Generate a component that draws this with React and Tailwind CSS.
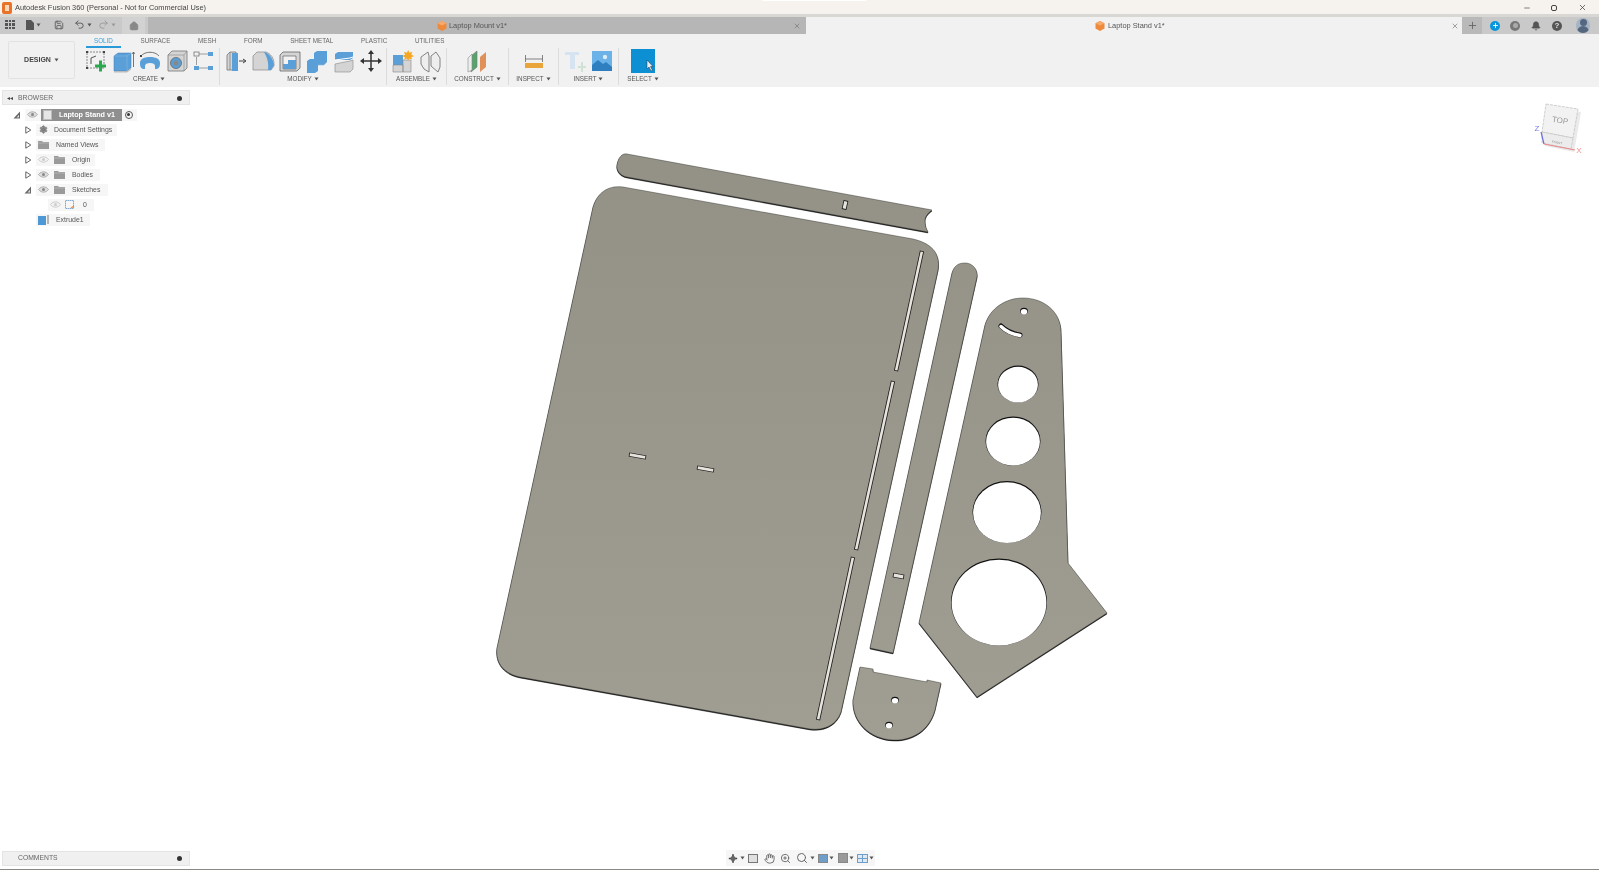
import React from "react";
import { Bell, Hand, Home, Save, Settings, Undo2, Redo2, X, Plus, Minus, Search, ZoomIn } from "lucide-react";

const Caret = ({ c = "#555" }) => (
  <svg width="5" height="4" viewBox="0 0 5 4" className="shrink-0"><path d="M0.500 0.500h4L2.500 3.500z" fill={c} /></svg>
);

const I = ({ children, w = 24, h = 24 }) => (
  <svg width={w} height={h} viewBox={`0 0 ${w} ${h}`} className="shrink-0">{children}</svg>
);

const B = "#5a9fd8", G = "#d4d4d4";

const SketchIcon = () => (
  <I>
    <path d="M3 3h17v16H3z" fill="none" stroke="#888" strokeDasharray="2 1" />
    <path d="M7 15V9l5-2" fill="none" stroke="#555" />
    <path d="M16 14h3v4h4v3h-4v4h-3v-4h-4v-3h4z" transform="translate(-1,-2.5)" fill="#2aa84f" />
    <rect x="2" y="2" width="2" height="2" fill="#444" /><rect x="19" y="2" width="2" height="2" fill="#444" /><rect x="2" y="18" width="2" height="2" fill="#444" />
  </I>
);
const ExtrudeIcon = () => (
  <I>
    <path d="M3 7l4-3h13v15l-4 3H3z" fill={B} stroke="#3f7fb5" strokeWidth=".5" />
    <path d="M16 22V7h-13M16 7l4-3" fill="none" stroke="#8cbbe0" strokeWidth=".6" />
    <path d="M3 22h13l4-3v1.500l-4 3H3z" fill="#bbb" />
    <path d="M22.500 18V3M21 5l1.500-2L24 5" fill="none" stroke="#555" strokeWidth=".8" />
  </I>
);
const RevolveIcon = () => (
  <I>
    <path d="M2 14c0-4 4-6 10-6s10 2 10 6-1 6-5 6v-3c0-2-2-3-5-3s-5 1-5 3v3c-4 0-5-2-5-6z" fill={B} />
    <path d="M3 7c4-5 14-5 18 0" fill="none" stroke="#555" strokeWidth=".8" />
    <rect x="2" y="6" width="2" height="2" fill="#444" />
  </I>
);
const HoleIcon = () => (
  <I>
    <path d="M3 6l4-4h15v17l-3 3H3z" fill={G} stroke="#777" strokeWidth=".8" />
    <path d="M3 6h16v16M19 6l3-4" fill="none" stroke="#888" strokeWidth=".6" />
    <circle cx="11" cy="14" r="5.500" fill={B} stroke="#666" strokeWidth=".8" />
    <circle cx="11" cy="14" r="2.500" fill="#888" />
  </I>
);
const PatternIcon = () => (
  <I>
    <path d="M7 5h9M7 19h9M4.500 8v8" stroke="#888" strokeWidth=".8" fill="none" />
    <rect x="2" y="3" width="5" height="4" fill="none" stroke="#777" strokeWidth=".8" />
    <rect x="16" y="3" width="5" height="4" fill={B} />
    <rect x="2" y="17" width="5" height="4" fill={B} />
    <rect x="16" y="17" width="5" height="4" fill={B} />
  </I>
);
const PressPullIcon = () => (
  <I>
    <path d="M3 6l3-3h6v18H3z" fill={G} stroke="#777" strokeWidth=".8" />
    <path d="M8 4h6v18H8z" fill={B} />
    <path d="M6 3v18" stroke="#777" strokeWidth=".7" />
    <path d="M15 12h6M19 10l3 2-3 2" fill="none" stroke="#444" strokeWidth="1" />
  </I>
);
const FilletIcon = () => (
  <I>
    <path d="M2 7l4-4h9c5 2 8 6 8 12v2l-3 4H2z" fill={G} stroke="#888" strokeWidth=".7" />
    <path d="M13 3c5 1 9 6 10 13l-3 5h-3c1-7-1-13-4-18z" fill={B} />
  </I>
);
const ShellIcon = () => (
  <I>
    <path d="M2 6l3-3h17v16l-3 3H2z" fill={G} stroke="#666" strokeWidth=".8" />
    <path d="M5 7h13v13H5z" fill="#f2f2f2" stroke="#666" strokeWidth=".7" />
    <path d="M10 11h8v9H5v-5h5z" fill={B} />
  </I>
);
const CombineIcon = () => (
  <I>
    <path d="M2 12l3-2h8v12l-3 2H2z" fill={B} />
    <path d="M9 4l3-2h10v11l-3 3h-6v-6H9z" fill={B} />
    <path d="M13 16h6" stroke="#87b8df" strokeWidth=".7" />
  </I>
);
const SplitIcon = () => (
  <I>
    <path d="M3 5l3-2h15v6l-3 2H3z" fill={B} />
    <path d="M3 11l15-2 3-1" stroke="#fff" strokeWidth="1" fill="none" />
    <path d="M3 15l15-3 3-1v9l-3 3H3z" fill={G} stroke="#888" strokeWidth=".6" />
  </I>
);
const MoveIcon = () => (
  <I>
    <path d="M12 3v18M3 12h18" stroke="#333" strokeWidth="1.500" />
    <path d="M12 1l3 4H9zM12 23l3-4H9zM1 12l4-3v6zM23 12l-4-3v6z" fill="#333" />
  </I>
);
const AssembleIcon = () => (
  <I>
    <path d="M2 6h10v10H2z" fill={B} />
    <path d="M2 16h10v7H2zM12 11h8v12h-8z" fill={G} stroke="#888" strokeWidth=".6" />
    <path d="M17 1l1.300 3 3-1-1 3 3 1.300-3 1.300 1 2.400-3-1-1.300 2-1.300-2-3 1 1-2.400-3-1.300 3-1.300-1-3 3 1z" fill="#f5a623" transform="translate(1,0) scale(.95)" />
  </I>
);
const JointIcon = () => (
  <I>
    <path d="M3 8l7-5 1 4v16l-5-3-3-5zM13 7l5-4 4 6v9l-2 5-7-6z" fill="#eee" stroke="#777" strokeWidth=".9" />
  </I>
);
const ConstructIcon = () => (
  <I>
    <path d="M5 7l6-5v16l-6 5z" fill="#57a56b" stroke="#777" strokeWidth=".6" />
    <path d="M2 9l4-4v16l-4 2z" fill="#eee" stroke="#888" strokeWidth=".6" />
    <path d="M14 8l6-5v15l-6 5z" fill="#e0915a" />
  </I>
);
const MeasureIcon = () => (
  <I>
    <path d="M6 6v7M23 6v7M6 10h17" stroke="#666" strokeWidth=".8" fill="none" transform="translate(-2.500,0)" />
    <rect x="3" y="14" width="18" height="5" fill="#e9a53a" />
  </I>
);
const DeriveIcon = () => (
  <I>
    <path d="M2 3h14v3h-4v14H7V6H2z" fill="#d5e4f0" />
    <path d="M15 17h3v-4h2v4h3v2h-3v4h-2v-4h-3z" fill="#cfe3d4" />
  </I>
);
const PictureIcon = () => (
  <I>
    <rect x="2" y="2" width="20" height="20" fill="#6ab2e8" />
    <path d="M2 22v-6l6-5 5 4 3-2 6 5v4z" fill="#2f7fc0" />
    <circle cx="15" cy="8" r="2.200" fill="#dcecf8" />
  </I>
);

const EyeIcon = ({ faint }) => (
  <svg width="11" height="7" viewBox="0 0 11 7" className="shrink-0">
    <path d="M.5 3.500C2 1.500 4 .8 5.500.8S9 1.500 10.500 3.500C9 5.500 7 6.200 5.500 6.200S2 5.500.5 3.500z" fill={faint ? "#f3f3f3" : "#ddd"} stroke={faint ? "#bbb" : "#999"} strokeWidth=".7" />
    <circle cx="5.500" cy="3.500" r="1.500" fill={faint ? "#ccc" : "#888"} />
  </svg>
);
const FolderIcon = () => (
  <svg width="11" height="8" viewBox="0 0 11 8" className="shrink-0"><path d="M0 0h4l1 1h6v7H0z" fill="#9a9a9a" /><path d="M0 2h11" stroke="#c4c4c4" strokeWidth=".6" /></svg>
);
const Arrow = ({ type }) => {
  if (type === "open") return <svg width="7" height="8" viewBox="0 0 7 8"><path d="M.8.8l5 3.200-5 3.200z" fill="#fff" stroke="#555" strokeWidth=".9" /></svg>;
  return <svg width="8" height="8" viewBox="0 0 8 8"><path d="M.5 7.500L7 .5v7z" fill="#666" /><path d="M3.500 6.500h2.500V3.800z" fill="#ddd" /></svg>;
};

const Row = ({ pl, arrow, pillCls, children }) => (
  <div className="flex items-center h-[15px]" >
    <div className={pl}>
      {arrow ? <div className="w-[12px] flex justify-center"><Arrow type={arrow} /></div> : null}
    </div>
    <div className={"flex items-center h-[12px] bg-[#f6f6f6] text-[6.900px] text-[#555] leading-[8px] " + pillCls}>{children}</div>
  </div>
);

const Txt = ({ cls = "", children }) => <span className={"pt-[1px] " + cls}>{children}</span>;

const ToolGroup = ({ width, label, children, last, inner = "", labelCls = "" }) => (
  <div className={"flex flex-col items-center h-[37px] " + width + (last ? "" : " border-r border-[#dcdcdc]")}>
    <div className={"flex justify-center items-center h-[25px] " + inner}>{children}</div>
    <div className={"flex items-center gap-[2px] text-[6.300px] leading-none text-[#555] mt-[3px] whitespace-nowrap " + labelCls}>{label}<Caret /></div>
  </div>
);
const Cell = ({ children }) => <div className="w-[27px] flex justify-center">{children}</div>;

const Hole = ({ cx, cy, rx, ry = rx }) => (
  <>
    <ellipse cx={cx} cy={cy} rx={rx} ry={ry} fill="#111" />
    <ellipse cx={cx} cy={cy + 0.7} rx={rx - 0.6} ry={ry - 0.6} fill="#fff" />
  </>
);
const Slot = ({ x1, y1, x2, y2, w = 4.2 }) => {
  const len = Math.hypot(x2 - x1, y2 - y1);
  const ux = ((x2 - x1) / len) * 0.8;
  const uy = ((y2 - y1) / len) * 0.8;
  return (
    <>
      <path d={`M${x1} ${y1}L${x2} ${y2}`} stroke="#1a1a1a" strokeWidth={w} />
      <path d={`M${x1 + ux} ${y1 + uy}L${x2 - ux} ${y2 - uy}`} stroke="#e6e4dc" strokeWidth={w - 1.6} />
    </>
  );
};
const Part = ({ d }) => (
  <>
    <path d={d} fill="#111" stroke="#111" strokeWidth=".5" transform="translate(0,0.9)" />
    <path d={d} fill="url(#metal)" stroke="#44443f" strokeWidth=".5" />
  </>
);

const Model = () => (
  <svg viewBox="0 87 1599 782" className="absolute inset-0 w-full h-full">
    <defs>
      <linearGradient id="metal" x1="0" y1="180" x2="0" y2="740" gradientUnits="userSpaceOnUse">
        <stop offset="0" stopColor="#949187" />
        <stop offset="1" stopColor="#a09d93" />
      </linearGradient>
    </defs>
    <Part d="M627 154L932 210Q924 216 925 222Q925 227 928 232L627 177C620 176 616 170 617 165C618 158 622 153 627 154Z" />
    <Part d="M593 207C597 193 608 185 623 187L913 239C930 243 941 252 938 270L841 712C837 724 825 731 810 729L520 677C505 674 495 664 497 648Z" />
    <Part d="M952 273C954 266 958 263 965 263C973 263 978 270 977 277L893 653L870 648Z" />
    <Part d="M985 325C990 308 1006 298 1023 298C1044 298 1061 312 1061 332L1068 563L1107 613L977 697L919 623Z" />
    <Part d="M860 667L873 669L873 672L927 682L927 680L941 683L935 710C929 732 910 741 893 740C870 739 852 722 853 700Z" />
    <Slot x1={922} y1={251} x2={896} y2={371} />
    <Slot x1={893} y1={381} x2={856} y2={550} />
    <Slot x1={853} y1={557} x2={818} y2={720} />
    <Slot x1={629} y1={454.5} x2={646} y2={457.5} />
    <Slot x1={697} y1={467.5} x2={714} y2={470.5} />
    <Slot x1={846} y1={200.5} x2={844} y2={209.5} w={4.8} />
    <Slot x1={893} y1={575} x2={904} y2={577} w={4.8} />
    <Hole cx={1018} cy={384} rx={20.5} ry={18.5} />
    <Hole cx={1013} cy={441} rx={27.5} ry={24.5} />
    <Hole cx={1007} cy={512} rx={34.5} ry={31} />
    <Hole cx={999} cy={602} rx={48} ry={43.5} />
    <Hole cx={1024} cy={311} rx={3.8} ry={3.3} />
    <Hole cx={895} cy={700} rx={3.8} ry={3.3} />
    <Hole cx={889} cy={725} rx={3.8} ry={3.3} />
    <path d="M1001 326Q1008 333 1020 335" fill="none" stroke="#111" strokeWidth="5" strokeLinecap="round" />
    <path d="M1001 326.500Q1008 333.500 1020 335.500" fill="none" stroke="#fff" strokeWidth="3.400" strokeLinecap="round" />

    {/* view cube */}
    <path d="M1546 104L1578 109L1573 138L1571 149L1542 143L1542 132Z" fill="#dcdcdc" opacity=".6" transform="translate(3,3)" />
    <path d="M1546 104L1578 109L1573 138L1542 132Z" fill="#f2f2f2" stroke="#bbb" strokeWidth=".7" strokeDasharray="3 1" />
    <path d="M1542 132L1573 138L1571 149L1542 143Z" fill="#ececec" stroke="#bbb" strokeWidth=".7" strokeDasharray="3 1" />
    <text x="1560" y="123" textAnchor="middle" transform="rotate(9 1560 121)" className="font-['Liberation_Sans']" fontSize="8" fill="#999">TOP</text>
    <text x="1557" y="143.500" textAnchor="middle" transform="rotate(10 1557 143)" className="font-['Liberation_Sans']" fontSize="3" fill="#888">FRONT</text>
    <path d="M1541 132L1544 144" stroke="#6a6ae0" strokeWidth="1.200" />
    <path d="M1544 144L1575 150" stroke="#e88a8a" strokeWidth="1.200" />
    <text x="1537" y="131" textAnchor="middle" className="font-['Liberation_Sans']" fontSize="8" fill="#7a7ae8">Z</text>
    <text x="1579" y="153" textAnchor="middle" className="font-['Liberation_Sans']" fontSize="8" fill="#ec8d8d">X</text>
  </svg>
);

const FusionDoc = () => (
  <svg width="10" height="10" viewBox="0 0 10 10" className="shrink-0"><path d="M5 0l4.500 2.200v5.300L5 10 .5 7.500V2.200z" fill="#ee8a3c" /><path d="M5 0l4.500 2.200L5 4.500.5 2.200z" fill="#f6ab6c" /></svg>
);

export default function App() {
  const tabs = ["SOLID", "SURFACE", "MESH", "FORM", "SHEET METAL", "PLASTIC", "UTILITIES"];
  return (
    <div className="relative h-screen w-full overflow-hidden flex flex-col bg-white font-['Liberation_Sans',sans-serif] blur-[0.35px]">
      {/* title bar */}
      <div className="relative h-[14px] shrink-0 bg-[#f6f3ef] flex items-center pt-[1px] text-[7.400px] text-[#444] leading-none">
        <div className="w-[15px] pl-[2px] flex"><div className="w-[10px] h-[12px] rounded-[2px] bg-[#e8742a] flex items-center justify-center"><div className="w-[4px] h-[6px] bg-[#fbd9b8]" /></div></div>
        <span>Autodesk Fusion 360 (Personal - Not for Commercial Use)</span>
        <div className="ml-auto flex items-center pr-[1px]">
          <div className="w-[27px] flex justify-center"><Minus size={8} color="#444" /></div>
          <div className="w-[28px] flex justify-center"><div className="w-[6px] h-[6px] border border-[#444] rounded-[2px]" /></div>
          <div className="w-[30px] flex justify-center pr-[2px]"><X size={9} color="#444" /></div>
        </div>
        <div className="absolute left-[762px] top-0 w-[104px] h-[1px] bg-white" />
      </div>
      <div className="h-[3px] shrink-0 bg-[#d9d7d3]" />
      {/* tab bar */}
      <div className="h-[17px] shrink-0 flex items-stretch bg-[#c9c9c9] text-[7.400px] leading-none text-[#555]">
        <div className="w-[122px] flex items-center pb-[2px]">
          <div className="w-[10px] ml-[5px] grid grid-cols-3 gap-[1px]">
            {Array.from({ length: 9 }).map((_, i) => <div key={i} className="h-[2.500px] bg-[#555]" />)}
          </div>
          <svg width="8" height="10" viewBox="0 0 8 10" className="ml-[11px]"><path d="M0 0h5l3 3v7H0z" fill="#555" /></svg>
          <div className="ml-[2px]"><Caret /></div>
          <Save size={10} color="#555" className="ml-[13px]" />
          <Undo2 size={11} color="#555" className="ml-[10px]" />
          <div className="ml-[2px]"><Caret /></div>
          <Redo2 size={11} color="#999" className="ml-[6px]" />
          <div className="ml-[2px]"><Caret c="#999" /></div>
        </div>
        <div className="w-[23px] bg-[#d2d2d2] flex items-center justify-center"><Home size={10} color="#888" fill="#888" /></div>
        <div className="w-[3px]" />
        <div className="w-[658px] bg-[#b6b6b6] flex items-center">
          <div className="ml-[289px]"><FusionDoc /></div>
          <span className="ml-[2px]">Laptop Mount v1*</span>
          <X size={8} color="#777" className="ml-auto mr-[5px]" />
        </div>
        <div className="w-[656px] bg-[#f1f1f1] flex items-center">
          <div className="ml-[289px]"><FusionDoc /></div>
          <span className="ml-[3px]">Laptop Stand v1*</span>
          <X size={8} color="#777" className="ml-auto mr-[3px]" />
        </div>
        <div className="w-[20px] bg-[#b9b9b9] flex items-center justify-center"><Plus size={11} color="#666" strokeWidth={2} /></div>
        <div className="flex-1 flex items-center">
          <div className="ml-[8px] w-[10px] h-[10px] rounded-full bg-[#0a96dc] flex items-center justify-center"><Plus size={7} color="#fff" strokeWidth={3} /></div>
          <div className="ml-[10px] w-[10px] h-[10px] rounded-full bg-[#777] flex items-center justify-center"><div className="w-[5px] h-[5px] rounded-full bg-[#aaa]" /></div>
          <Bell size={10} color="#555" fill="#555" className="ml-[11px]" />
          <div className="ml-[11px] w-[10px] h-[10px] rounded-full bg-[#555] flex items-center justify-center text-[8px] font-bold text-[#ddd]">?</div>
          <div className="ml-[14px] w-[14px] h-[15px] rounded-full bg-[#a5b4c6] flex flex-col items-center overflow-hidden">
            <div className="w-[7px] h-[7px] mt-[1px] rounded-full bg-[#55677f]" />
            <div className="w-[12px] h-[8px] rounded-t-full bg-[#55677f]" />
          </div>
        </div>
      </div>
      {/* toolbar */}
      <div className="h-[53px] shrink-0 bg-[#f1f1f1] flex">
        <div className="ml-[8px] mt-[7px] w-[67px] h-[38px] border border-[#e2e2e2] rounded-[2px] flex items-center justify-center gap-[3px] text-[7px] text-[#444] font-semibold">
          DESIGN <Caret />
        </div>
        <div className="flex flex-col ml-[8px]">
          <div className="flex h-[14px] items-center gap-[27.700px] pl-[11px] pt-[1px] text-[6.300px] leading-none text-[#666] whitespace-nowrap">
            {tabs.map((t, i) => (
              <div key={t} className={"relative " + (i === 0 ? "text-[#3a9fd8]" : "")}>
                {t}
                {i === 0 ? <div className="absolute left-[-8px] right-[-8px] top-[8px] h-[2px] bg-[#2a9ad8]" /> : null}
              </div>
            ))}
          </div>
          <div className="flex">
            <ToolGroup width="w-[137px]" label="CREATE" inner="pr-[3px]" labelCls="pr-[4px]">
              <Cell><SketchIcon /></Cell><Cell><ExtrudeIcon /></Cell><Cell><RevolveIcon /></Cell><Cell><HoleIcon /></Cell><Cell><PatternIcon /></Cell>
            </ToolGroup>
            <ToolGroup width="w-[167px]" label="MODIFY" inner="pl-[1px]">
              <Cell><PressPullIcon /></Cell><Cell><FilletIcon /></Cell><Cell><ShellIcon /></Cell><Cell><CombineIcon /></Cell><Cell><SplitIcon /></Cell><Cell><MoveIcon /></Cell>
            </ToolGroup>
            <ToolGroup width="w-[60px]" label="ASSEMBLE">
              <Cell><AssembleIcon /></Cell><Cell><JointIcon /></Cell>
            </ToolGroup>
            <ToolGroup width="w-[62px]" label="CONSTRUCT">
              <Cell><ConstructIcon /></Cell>
            </ToolGroup>
            <ToolGroup width="w-[50px]" label="INSPECT">
              <Cell><MeasureIcon /></Cell>
            </ToolGroup>
            <ToolGroup width="w-[60px]" label="INSERT">
              <Cell><DeriveIcon /></Cell><Cell><PictureIcon /></Cell>
            </ToolGroup>
            <ToolGroup width="w-[48px]" label="SELECT" last>
              <div className="relative w-[24px] h-[24px] bg-[#0d8fd3]">
                <svg width="8" height="11" viewBox="0 0 8 11" className="absolute left-[15px] top-[11px]"><path d="M1 0v9l2-2 2 4 1.500-.7-2-3.800H7z" fill="#e8eef2" stroke="#333" strokeWidth=".5" /></svg>
              </div>
            </ToolGroup>
          </div>
        </div>
      </div>
      {/* viewport */}
      <div className="relative flex-1 min-h-0">
        <Model />
        <div className="relative h-full flex flex-col justify-between pb-[3px]">
          <div className="w-[188px] ml-[2px] mt-[3px]">
            <div className="h-[15px] bg-[#f0f0f0] border border-[#e4e4e4] flex items-center pl-[4px] pr-[3px] pt-[1px] text-[6.800px] text-[#666] leading-none">
              <span className="text-[6px] w-[11px] text-[#444]">◂◂</span>
              <span>BROWSER</span>
              <div className="ml-auto mr-[4px] w-[5px] h-[5px] rounded-full bg-[#333]" />
            </div>
            <div className="mt-[2px] -ml-[2px]">
              <Row pl="pl-[11px] w-[25px]" arrow="filled" pillCls="">
                <div className="w-[16px] flex justify-center pr-[2px]"><EyeIcon /></div>
                <div className="w-[81px] h-[12px] bg-[#8f8f8f] flex items-center text-[7.200px] text-white font-bold">
                  <div className="ml-[2px] w-[9px] h-[10px] bg-[#e6e6e6] border border-[#bbb]" />
                  <Txt cls="ml-[7px]">Laptop Stand v1</Txt>
                </div>
                <div className="w-[15px] flex justify-center pr-[2px]"><div className="w-[8px] h-[8px] rounded-full border border-[#555] flex items-center justify-center"><div className="w-[3px] h-[3px] rounded-full bg-[#333]" /></div></div>
              </Row>
              <Row pl="pl-[22px] w-[36px]" arrow="open" pillCls="w-[81px]">
                <div className="w-[14px] flex justify-center"><Settings size={9} color="#777" fill="#888" /></div>
                <Txt cls="ml-[4px]">Document Settings</Txt>
              </Row>
              <Row pl="pl-[22px] w-[36px]" arrow="open" pillCls="w-[69px]">
                <div className="w-[14px] flex justify-center"><FolderIcon /></div>
                <Txt cls="ml-[6px]">Named Views</Txt>
              </Row>
              <Row pl="pl-[22px] w-[36px]" arrow="open" pillCls="w-[59px]">
                <div className="w-[15px] flex justify-center"><EyeIcon faint /></div>
                <div className="w-[16px] flex justify-center"><FolderIcon /></div>
                <Txt cls="ml-[5px]">Origin</Txt>
              </Row>
              <Row pl="pl-[22px] w-[36px]" arrow="open" pillCls="w-[64px]">
                <div className="w-[15px] flex justify-center"><EyeIcon /></div>
                <div className="w-[16px] flex justify-center"><FolderIcon /></div>
                <Txt cls="ml-[5px]">Bodies</Txt>
              </Row>
              <Row pl="pl-[22px] w-[36px]" arrow="filled" pillCls="w-[72px]">
                <div className="w-[15px] flex justify-center"><EyeIcon /></div>
                <div className="w-[16px] flex justify-center"><FolderIcon /></div>
                <Txt cls="ml-[5px]">Sketches</Txt>
              </Row>
              <Row pl="pl-[48px]" pillCls="w-[46px]">
                <div className="w-[14px] flex justify-center"><EyeIcon faint /></div>
                <div className="w-[16px] flex justify-center">
                  <svg width="10" height="10" viewBox="0 0 10 10"><path d="M.5.5h8v8h-8z" fill="none" stroke="#5588bb" strokeWidth=".7" strokeDasharray="1.500 .5" /><path d="M6 8l3-2" stroke="#ee8a3c" strokeWidth="1.200" /></svg>
                </div>
                <Txt cls="ml-[5px]">0</Txt>
              </Row>
              <Row pl="pl-[36px]" pillCls="w-[54px]">
                <div className="w-[15px] flex justify-center">
                  <svg width="11" height="10" viewBox="0 0 11 10"><path d="M0 1h8v9H0z" fill="#4f98d6" /><path d="M10 0v9" stroke="#777" /></svg>
                </div>
                <Txt cls="ml-[5px]">Extrude1</Txt>
              </Row>
            </div>
          </div>
          <div className="flex items-center">
            <div className="w-[188px] ml-[2px] h-[15px] bg-[#f0f0f0] border border-[#e4e4e4] flex items-center pl-[15px] pt-[1px] text-[6.800px] text-[#666] leading-none">
              <span>COMMENTS</span>
              <div className="ml-auto mr-[7px] w-[5px] h-[5px] rounded-full bg-[#333]" />
            </div>
            <div className="ml-[536px] w-[149px] h-[16px] bg-[#f6f6f6] flex items-center pl-[2px]">
              <div className="w-[10px] flex justify-center"><svg width="11" height="11" viewBox="0 0 24 24"><path d="M12 2v20M2 12h20" stroke="#444" strokeWidth="4" /><circle cx="12" cy="12" r="6" fill="#666" /></svg></div>
              <div className="ml-[2px]"><Caret /></div>
              <div className="ml-[3px] w-[10px] h-[9px] border border-[#777] bg-[#e0e0e0]" />
              <Hand size={11} color="#666" className="ml-[6px]" />
              <ZoomIn size={11} color="#666" className="ml-[5px]" />
              <Search size={12} color="#666" className="ml-[5px]" />
              <div className="ml-[2px]"><Caret /></div>
              <div className="ml-[3px] w-[10px] h-[9px] bg-[#6f9fc9] border border-[#888]" />
              <div className="ml-[1px]"><Caret /></div>
              <div className="ml-[4px] w-[10px] h-[10px] bg-[#999] border border-[#888]" />
              <div className="ml-[1px]"><Caret /></div>
              <div className="ml-[3px] w-[11px] h-[9px] bg-[#6f9fc9] grid grid-cols-2 gap-[1px] border border-[#6f9fc9]">
                <div className="bg-[#dfeaf4]" /><div className="bg-[#dfeaf4]" /><div className="bg-[#dfeaf4]" /><div className="bg-[#dfeaf4]" />
              </div>
              <div className="ml-[1px]"><Caret /></div>
            </div>
          </div>
        </div>
      </div>
      <div className="h-[1px] shrink-0 bg-[#8a8a84]" />
    </div>
  );
}
